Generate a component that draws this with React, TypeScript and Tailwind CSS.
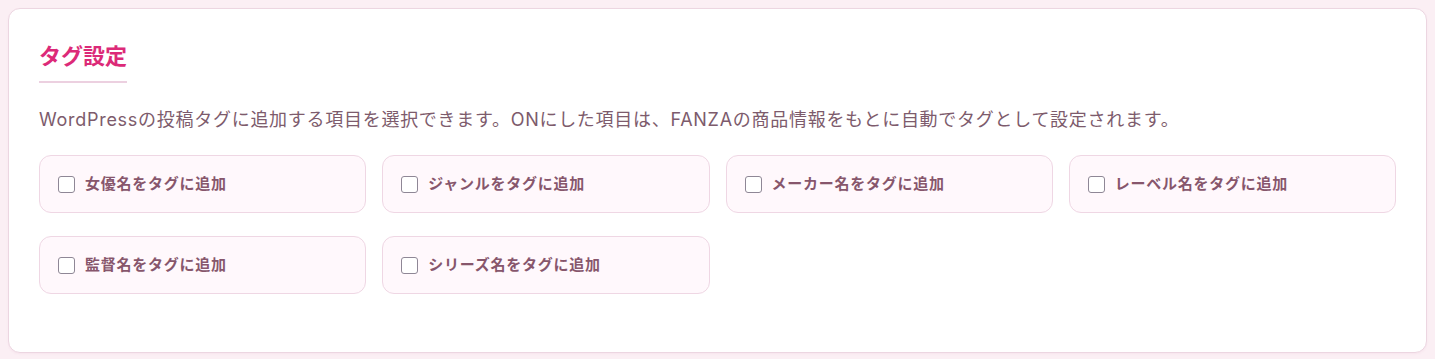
const options = [
  "女優名をタグに追加",
  "ジャンルをタグに追加",
  "メーカー名をタグに追加",
  "レーベル名をタグに追加",
  "監督名をタグに追加",
  "シリーズ名をタグに追加",
];

export default function App() {
  return (
    <div
      className="min-h-[359px] bg-[#fbeff4] p-2"
      style={{ fontFamily: '"Inter", "Noto Sans CJK JP", sans-serif' }}
    >
      <section className="rounded-xl border border-[#ecd6e1] bg-white px-[30px] pt-[33px] pb-[58px] shadow-[0_1px_2px_rgba(200,120,160,0.08)]">
        <h2 className="inline-block border-b-2 border-[#ecd0e0] pb-[11px] text-[22px] leading-[28px] font-bold text-[#dc2a78]">
          タグ設定
        </h2>

        <p className="mt-[23px] text-[18px] leading-[28px] tracking-[0.04em] text-[#7d5b6c]">
          WordPressの投稿タグに追加する項目を選択できます。ONにした項目は、FANZAの商品情報をもとに自動でタグとして設定されます。
        </p>

        <div className="mt-[21px] grid grid-cols-4 gap-x-4 gap-y-[23px]">
          {options.map((label) => (
            <label
              key={label}
              className="flex h-[58px] items-center gap-[10px] rounded-xl border border-[#efd7e4] bg-[#fff8fc] px-[18px]"
            >
              <span className="h-[17px] w-[17px] shrink-0 rounded-[3px] border border-[#8f8796] bg-white" />
              <span className="text-[15px] font-bold tracking-[0.05em] text-[#87566c]">{label}</span>
            </label>
          ))}
        </div>
      </section>
    </div>
  );
}
